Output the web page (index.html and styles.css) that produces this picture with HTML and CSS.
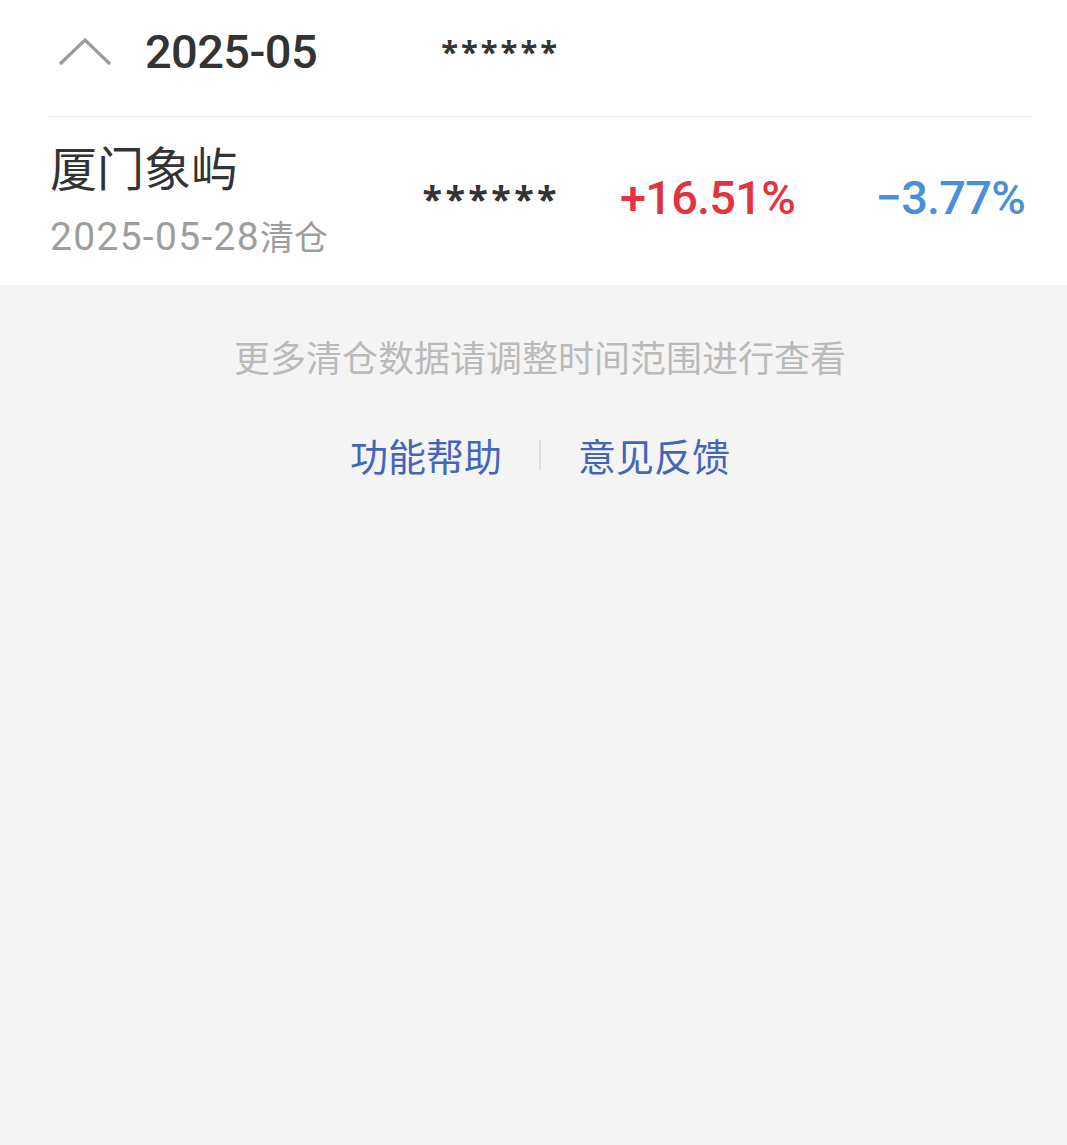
FILE: index.html
```html
<!DOCTYPE html>
<html lang="zh-CN">
<head>
<meta charset="utf-8">
<title>清仓</title>
<link rel="stylesheet" href="styles.css">
</head>
<body>
<div class="card">
  <div class="grid month-row">
    <div class="month-cell">
      <svg class="chevron" width="56" height="30" viewBox="0 0 56 30"><path d="M3 27 L28 3 L53 27" fill="none" stroke="#9b9b9b" stroke-width="3.2"/></svg>
      <span class="month">2025-05</span>
    </div>
    <div class="mask mask-sm">******</div>
    <div></div>
    <div></div>
  </div>
  <div class="divider"></div>
  <div class="grid stock-row">
    <div class="stock-info">
      <div class="stock-name">厦门象屿</div>
      <div class="stock-sub"><span class="num">2025-05-28</span>清仓</div>
    </div>
    <div class="mask">******</div>
    <div class="pct up">+16.51%</div>
    <div class="pct down">−3.77%</div>
  </div>
</div>
<div class="footer">
  <p class="hint">更多清仓数据请调整时间范围进行查看</p>
  <div class="links">
    <a class="link">功能帮助</a>
    <span class="sep"></span>
    <a class="link">意见反馈</a>
  </div>
</div>
</body>
</html>
```
FILE: styles.css
```css
html, body {
  margin: 0;
  padding: 0;
}
body {
  background: #f4f4f4;
  font-family: Roboto, "Noto Sans CJK SC", sans-serif;
  width: 1067px;
  height: 1145px;
  overflow: hidden;
}
.card {
  background: #ffffff;
}
.grid {
  display: grid;
  grid-template-columns: 1fr 200px 238px 230px;
  padding: 0 42px 0 50px;
  align-items: center;
}
.month-row {
  height: 106px;
  padding-bottom: 10px;
}
.month-cell {
  display: flex;
  align-items: center;
}
.chevron {
  margin-left: 7px;
  margin-top: -2px;
}
.month {
  margin-left: 32px;
  margin-top: -3px;
  font-size: 47px;
  font-weight: 500;
  color: #333333;
  letter-spacing: -0.6px;
  line-height: 1;
}
.mask {
  justify-self: end;
  font-family: "Noto Sans", sans-serif;
  font-weight: bold;
  font-size: 36px;
  letter-spacing: 3.4px;
  margin-right: -3px;
  color: #333333;
  line-height: 1;
  margin-top: -4px;
}
.mask-sm {
  font-size: 31px;
  letter-spacing: 3px;
  margin-top: -4px;
}
.divider {
  height: 1px;
  background: #ececec;
  margin: 0 35px 0 48px;
}
.stock-row {
  height: 168px;
}
.stock-info {
  align-self: start;
  display: flex;
  flex-direction: column;
  padding-top: 18px;
}
.stock-name {
  font-family: "Noto Sans CJK SC", sans-serif;
  font-size: 47px;
  line-height: 62px;
  color: #333333;
}
.stock-sub {
  margin-top: 18px;
  font-family: "Noto Sans CJK SC", sans-serif;
  font-size: 34px;
  line-height: 42px;
  color: #9e9e9e;
}
.stock-sub .num {
  font-family: Roboto, sans-serif;
  font-size: 39px;
  letter-spacing: 1.3px;
}
.pct {
  justify-self: end;
  font-size: 47px;
  font-weight: 500;
  line-height: 1;
  margin-top: -8px;
  letter-spacing: -0.8px;
}
.up {
  color: #e2333f;
}
.down {
  color: #4a8fd8;
}
.footer {
  display: flex;
  flex-direction: column;
  align-items: center;
  padding-left: 13px;
  font-family: "Noto Sans CJK SC", sans-serif;
}
.hint {
  margin: 47px 0 0;
  font-size: 36px;
  line-height: 48px;
  color: #bababa;
}
.links {
  display: flex;
  align-items: center;
  margin-top: 50px;
}
.link {
  font-size: 38px;
  line-height: 50px;
  color: #4466b8;
}
.sep {
  width: 2px;
  height: 30px;
  background: #dddddd;
  margin: 0 37px;
}
```
